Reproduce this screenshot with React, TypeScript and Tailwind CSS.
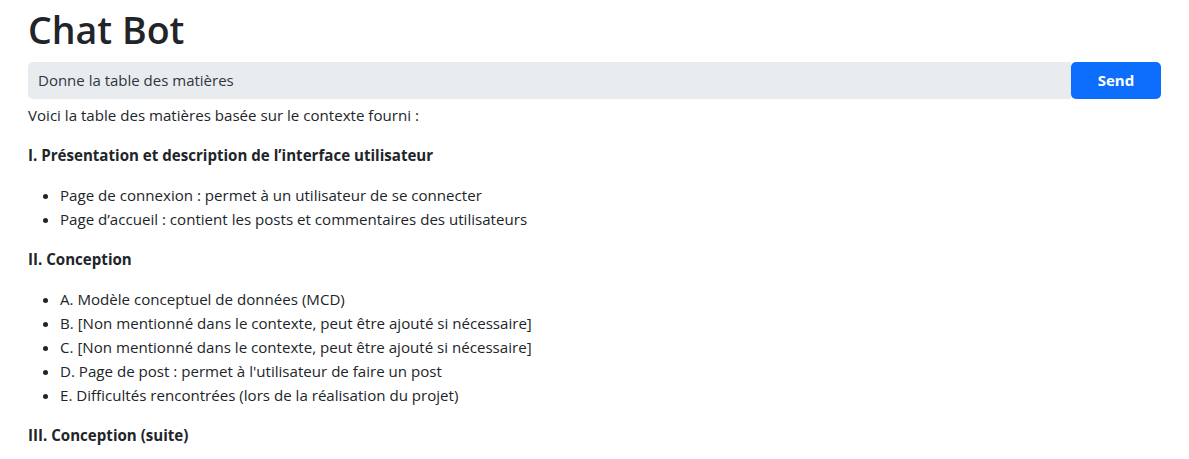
import React from "react";

export default function App() {
  const font = { fontFamily: '"Open Sans", "Noto Sans", sans-serif' };
  return (
    <div className="min-h-screen bg-white text-[#212529] px-[28px] pt-[6px]" style={font}>
      <h1 className="text-[37.5px] leading-[48px] font-semibold mb-[8px]">Chat Bot</h1>
      <div className="flex h-[37px]">
        <div className="flex-1 bg-[#e9ecef] rounded-l-[5px] flex items-center pl-[10px] text-[15px] text-[#2f3640]">
          Donne la table des matières
        </div>
        <button className="w-[90px] bg-[#0d6efd] text-white font-bold rounded-[5px] text-[15px]">Send</button>
      </div>
      <div className="mt-[4px] text-[15.1px] leading-[24px]">
        <p className="mb-[16px]">Voici la table des matières basée sur le contexte fourni :</p>
        <p className="mb-[16px] font-bold">I. Présentation et description de l’interface utilisateur</p>
        <ul className="mb-[16px] pl-[32px] list-disc">
          <li>Page de connexion : permet à un utilisateur de se connecter</li>
          <li>Page d’accueil : contient les posts et commentaires des utilisateurs</li>
        </ul>
        <p className="mb-[16px] font-bold">II. Conception</p>
        <ul className="mb-[16px] pl-[32px] list-disc">
          <li>A. Modèle conceptuel de données (MCD)</li>
          <li>B. [Non mentionné dans le contexte, peut être ajouté si nécessaire]</li>
          <li>C. [Non mentionné dans le contexte, peut être ajouté si nécessaire]</li>
          <li>D. Page de post : permet à l'utilisateur de faire un post</li>
          <li>E. Difficultés rencontrées (lors de la réalisation du projet)</li>
        </ul>
        <p className="mb-[16px] font-bold">III. Conception (suite)</p>
      </div>
    </div>
  );
}
